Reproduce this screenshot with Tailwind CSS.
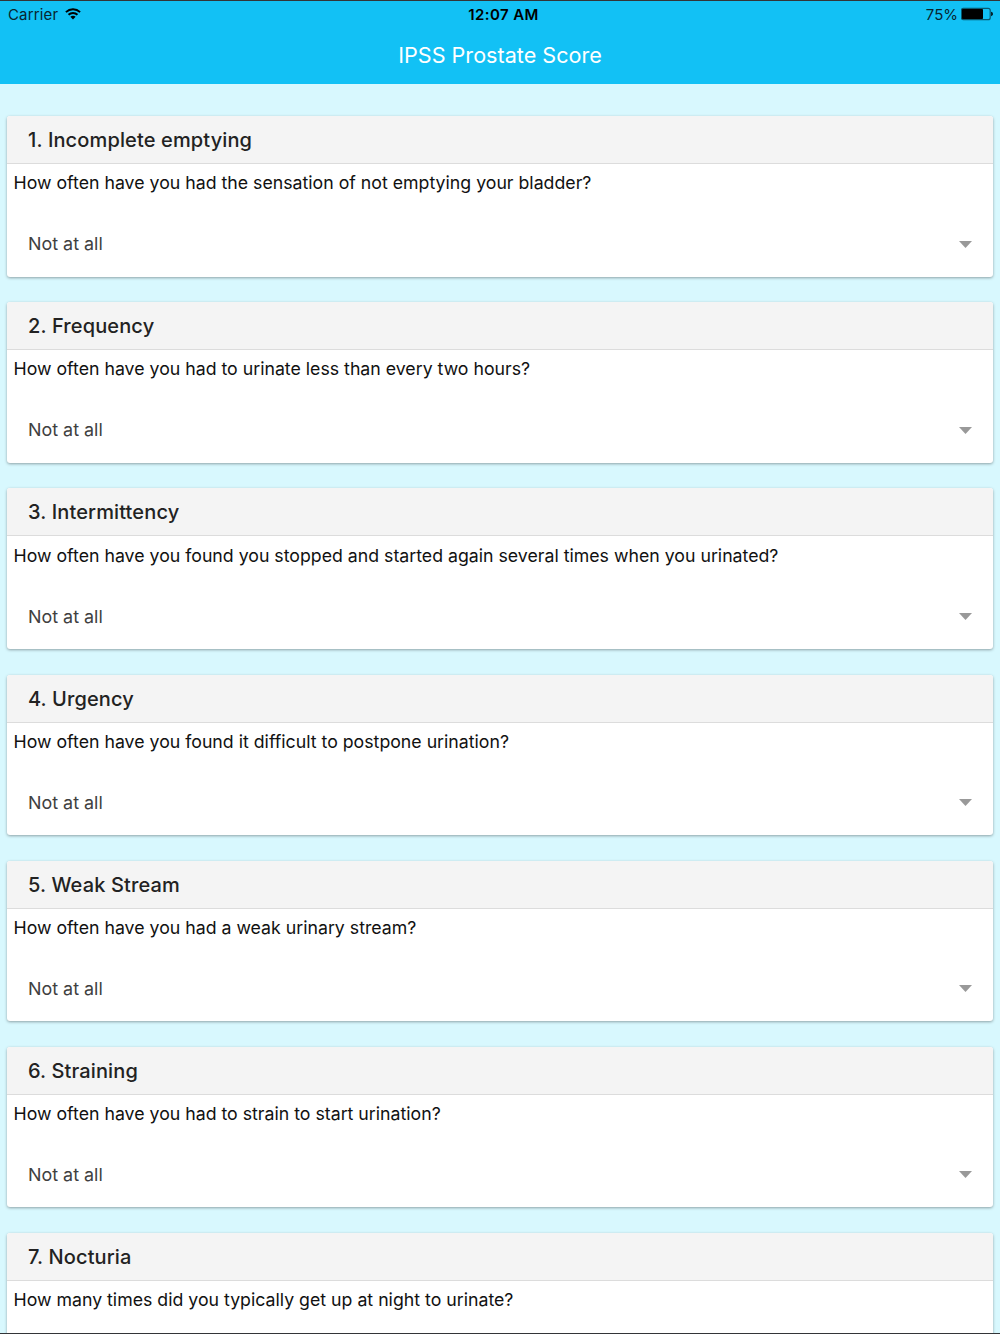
<!DOCTYPE html>
<html lang="en">
<head>
    <meta charset="UTF-8">
    <meta name="viewport" content="width=device-width, initial-scale=1.0">
    <title>IPSS Prostate Score</title>
    <script src="https://cdn.jsdelivr.net/npm/@tailwindcss/browser@4"></script>
</head>
<body class="bg-[#d8f8fe] h-[1334px] overflow-hidden flex flex-col border-y border-[#333538] font-['Inter',sans-serif] text-black">
    <header class="h-[83px] shrink-0 bg-[#12c1f5] -mt-px border-t border-[#0b3a4b] box-content">
        <div class="grid grid-cols-3 items-center h-[26px] pl-2 pr-[7px] text-[15px] leading-none">
            <div class="flex items-center gap-[7px]">
                <span class="text-[#08262f] tracking-[0.15px]">Carrier</span>
                <svg class="w-4 h-3" viewBox="0 0 16 12" fill="none" stroke="#000" stroke-width="1.9">
                    <path d="M0.9 4.1C4.9 0.3 11.1 0.3 15.1 4.1"/>
                    <path d="M3.5 6.8C6 4.4 10 4.4 12.5 6.8"/>
                    <path d="M5.4 8.8C6.9 7.4 9.1 7.4 10.6 8.8L8 11.6Z" fill="#000" stroke="none"/>
                </svg>
            </div>
            <span class="text-center font-semibold tracking-[0.4px] pl-1.5">12:07 AM</span>
            <div class="flex items-center justify-end gap-[3px]">
                <span class="text-[#08262f]">75%</span>
                <svg class="w-8 h-[14px]" viewBox="0 0 32 14">
                    <rect x="0.3" y="1.3" width="28.9" height="11.4" rx="2" fill="none" stroke="#075a72" stroke-width="1.2"/>
                    <rect x="0.9" y="2" width="21.1" height="10" rx="0.8" fill="#000"/>
                    <path d="M30.2 4.8C32.4 5.4 32.4 8.6 30.2 9.2Z" fill="#000"/>
                </svg>
            </div>
        </div>
        <h1 class="h-[58px] flex items-center justify-center text-[21.6px] leading-none text-white">IPSS Prostate Score</h1>
    </header>

    <main id="questions" class="pt-[32.2px] px-[7px] flex flex-col gap-[25.65px]"></main>

    <script>
        const questions = [
            { title: '1. Incomplete emptying', text: 'How often have you had the sensation of not emptying your bladder?', answer: 'Not at all' },
            { title: '2. Frequency', text: 'How often have you had to urinate less than every two hours?', answer: 'Not at all' },
            { title: '3. Intermittency', text: 'How often have you found you stopped and started again several times when you urinated?', answer: 'Not at all' },
            { title: '4. Urgency', text: 'How often have you found it difficult to postpone urination?', answer: 'Not at all' },
            { title: '5. Weak Stream', text: 'How often have you had a weak urinary stream?', answer: 'Not at all' },
            { title: '6. Straining', text: 'How often have you had to strain to start urination?', answer: 'Not at all' },
            { title: '7. Nocturia', text: 'How many times did you typically get up at night to urinate?' }
        ];

        const answerRow = (answer) => `
            <div class="h-[74px] pt-[10px] flex items-center justify-between px-[21px] text-[17.9px] leading-none text-[#404040]">
                <span>${answer}</span>
                <svg class="w-[13px] h-[7px]" viewBox="0 0 13 7" fill="#999"><path d="M0 0H13L6.5 7Z"/></svg>
            </div>
        `;

        document.getElementById('questions').innerHTML = questions.map(question => `
            <section class="h-[160.5px] shrink-0 bg-white rounded-[3px] overflow-hidden shadow-[0_1px_3px_rgba(0,0,0,0.35)]">
                <h2 class="h-[48px] flex items-center pl-[21px] pt-px bg-[#f4f4f4] border-b border-[#dcdcdc] text-[20px] tracking-[0.13px] leading-none font-medium text-[#222]">${question.title}</h2>
                <p class="h-[38px] flex items-center pl-[6.5px] text-[17.73px] leading-none whitespace-nowrap text-[#111]">${question.text}</p>
                ${question.answer ? answerRow(question.answer) : ''}
            </section>
        `).join('');
    </script>
</body>
</html>
